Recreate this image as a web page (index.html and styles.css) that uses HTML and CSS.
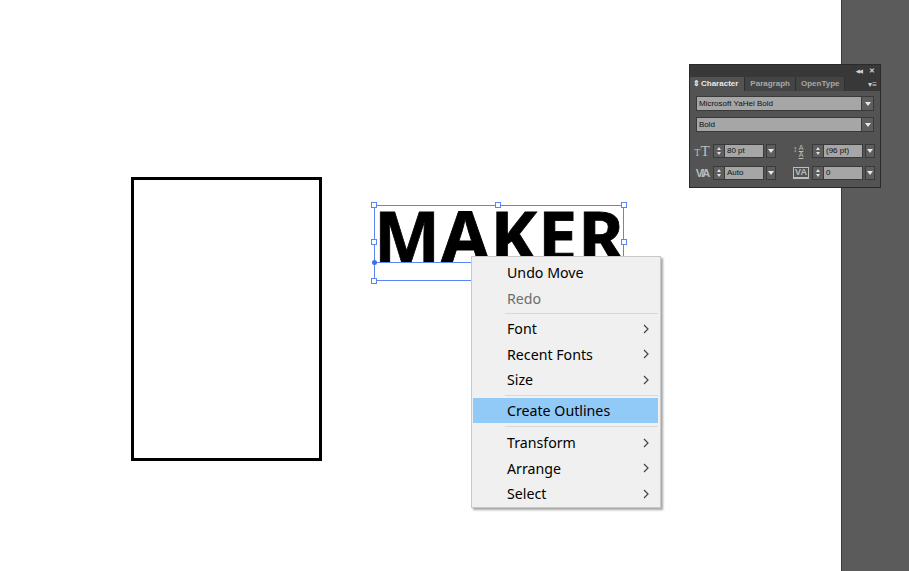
FILE: index.html
```html
<!DOCTYPE html>
<html>
<head>
<meta charset="utf-8">
<link rel="stylesheet" href="styles.css">
</head>
<body>
<div class="app">
  <div class="canvas">
    <div class="artboard"></div>

    <div class="maker">MAKER</div>
    <div class="selection">
      <span class="baseline"></span>
      <span class="dot"></span>
      <span class="h h-tl"></span><span class="h h-tm"></span><span class="h h-tr"></span>
      <span class="h h-ml"></span><span class="h h-mr"></span>
      <span class="h h-bl"></span>
    </div>

    <div class="menu">
      <div class="item">Undo Move</div>
      <div class="item disabled">Redo</div>
      <div class="sep"></div>
      <div class="item sub">Font<svg class="chev" viewBox="0 0 6 10"><path d="M1 1 L5 5 L1 9" /></svg></div>
      <div class="item sub">Recent Fonts<svg class="chev" viewBox="0 0 6 10"><path d="M1 1 L5 5 L1 9" /></svg></div>
      <div class="item sub">Size<svg class="chev" viewBox="0 0 6 10"><path d="M1 1 L5 5 L1 9" /></svg></div>
      <div class="sep"></div>
      <div class="item active">Create Outlines</div>
      <div class="sep last"></div>
      <div class="item sub">Transform<svg class="chev" viewBox="0 0 6 10"><path d="M1 1 L5 5 L1 9" /></svg></div>
      <div class="item sub">Arrange<svg class="chev" viewBox="0 0 6 10"><path d="M1 1 L5 5 L1 9" /></svg></div>
      <div class="item sub">Select<svg class="chev" viewBox="0 0 6 10"><path d="M1 1 L5 5 L1 9" /></svg></div>
    </div>

    <div class="panel">
      <div class="ph">
        <span class="ph-btn">&#9664;&#9664;</span>
        <span class="ph-btn x">&#10005;</span>
      </div>
      <div class="tabs">
        <div class="tab on"><span class="updn">&#8661;</span>Character</div>
        <div class="tab">Paragraph</div>
        <div class="tab">OpenType</div>
        <div class="tab-fill"><span class="pmenu">&#9662;&#8801;</span></div>
      </div>
      <div class="pbody">
        <div class="dd"><span class="dd-text">Microsoft YaHei Bold</span><span class="dd-arrow"><i class="tri"></i></span></div>
        <div class="dd second"><span class="dd-text">Bold</span><span class="dd-arrow"><i class="tri"></i></span></div>
        <div class="prow">
          <div class="grp">
            <span class="ico tt"><span class="t1">T</span><span class="t2">T</span></span>
            <span class="spin"><i class="up"></i><i class="dn"></i></span>
            <span class="fld">80 pt</span>
            <span class="arr"><i class="tri"></i></span>
          </div>
          <div class="grp right">
            <span class="ico lead"><span class="la">A</span><span class="la">A</span><span class="lv">&#8597;</span></span>
            <span class="spin"><i class="up"></i><i class="dn"></i></span>
            <span class="fld">(96 pt)</span>
            <span class="arr"><i class="tri"></i></span>
          </div>
        </div>
        <div class="prow two">
          <div class="grp">
            <span class="ico kern">V/A</span>
            <span class="spin"><i class="up"></i><i class="dn"></i></span>
            <span class="fld">Auto</span>
            <span class="arr"><i class="tri"></i></span>
          </div>
          <div class="grp right">
            <span class="ico track"><span class="va">VA</span></span>
            <span class="spin"><i class="up"></i><i class="dn"></i></span>
            <span class="fld">0</span>
            <span class="arr"><i class="tri"></i></span>
          </div>
        </div>
      </div>
    </div>
  </div>
  <div class="strip"></div>
</div>
</body>
</html>
```

FILE: styles.css
```css
* { box-sizing: border-box; }
html, body { margin: 0; padding: 0; }
body {
  width: 909px;
  height: 571px;
  overflow: hidden;
  background: #ffffff;
  font-family: "Noto Sans", "Liberation Sans", sans-serif;
}
.app {
  display: flex;
  width: 909px;
  height: 571px;
}
.canvas {
  position: relative;
  flex: 1;
  background: #ffffff;
}
.strip {
  width: 68px;
  background: #5b5b5b;
  border-left: 1px solid #3a3a3a;
}

/* artboard rectangle */
.artboard {
  position: absolute;
  left: 131px;
  top: 177px;
  width: 191px;
  height: 284px;
  border: 3px solid #000;
}

/* MAKER text */
.maker {
  position: absolute;
  left: 374px;
  top: 200px;
  font-family: "Noto Sans", sans-serif;
  font-weight: 700;
  font-size: 70px;
  line-height: 70px;
  color: #000;
  letter-spacing: 1px;
  -webkit-text-stroke: 0.8px #000;
}
.selection {
  position: absolute;
  left: 374px;
  top: 205px;
  width: 250px;
  height: 76px;
  border: 1px solid #5a86f2;
}
.baseline {
  position: absolute;
  left: 0;
  top: 56px;
  width: 100px;
  height: 1px;
  background: #5a86f2;
}
.dot {
  position: absolute;
  left: -3px;
  top: 54px;
  width: 5px;
  height: 5px;
  border-radius: 50%;
  background: #3c6ef0;
}
.h {
  position: absolute;
  width: 6px;
  height: 6px;
  background: #fff;
  border: 1px solid #5a86f2;
}
.h-tl { left: -4px; top: -4px; }
.h-tm { left: 120px; top: -4px; }
.h-tr { right: -4px; top: -4px; }
.h-ml { left: -4px; top: 33px; }
.h-mr { right: -4px; top: 33px; }
.h-bl { left: -4px; bottom: -4px; }

/* context menu */
.menu {
  position: absolute;
  left: 471px;
  top: 256px;
  width: 190px;
  padding: 3px 2px 0 1px;
  background: #f0f0f0;
  border: 1px solid #c8c8c8;
  box-shadow: 2px 2px 2px rgba(0,0,0,0.35);
}
.item {
  position: relative;
  height: 25.5px;
  line-height: 25.5px;
  padding-left: 34px;
  font-size: 14.2px;
  color: #000;
  display: flex;
  align-items: center;
  justify-content: space-between;
  padding-right: 9px;
}
.item.disabled { color: #6d6d6d; }
.item.active { background: #91c9f7; }
.chev {
  width: 6px;
  height: 10px;
  fill: none;
  stroke: #444;
  stroke-width: 1.2;
}
.sep {
  height: 5px;
  margin-left: 32px;
  display: flex;
  align-items: center;
}
.sep.last { height: 7px; }
.sep::before {
  content: "";
  flex: 1;
  height: 1px;
  background: #d8d8d8;
}

/* character panel */
.panel {
  position: absolute;
  left: 689px;
  top: 64px;
  width: 192px;
  height: 124px;
  background: #535353;
  border: 1px solid #2a2a2a;
  font-family: "Liberation Sans", Arial, sans-serif;
  font-size: 8px;
  color: #111;
  display: flex;
  flex-direction: column;
}
.ph {
  height: 12px;
  background: #383838;
  display: flex;
  justify-content: flex-end;
  align-items: center;
  gap: 7px;
  padding-right: 5px;
}
.ph-btn {
  color: #cfcfcf;
  font-size: 5px;
  letter-spacing: -1px;
  font-weight: 700;
}
.ph-btn.x { font-size: 7px; letter-spacing: 0; }
.tabs {
  height: 14px;
  display: flex;
  background: #383838;
}
.tab {
  padding: 0 5px;
  height: 14px;
  line-height: 14px;
  background: #444444;
  color: #a8a8a8;
  font-weight: 700;
  font-size: 8px;
  border-right: 1px solid #2f2f2f;
}
.tab.on {
  background: #535353;
  color: #e8e8e8;
  padding: 0 6px 0 3px;
}
.updn { font-size: 8px; margin-right: 1px; }
.tab-fill {
  flex: 1;
  display: flex;
  justify-content: flex-end;
  align-items: center;
  padding-right: 3px;
}
.pmenu { color: #cfcfcf; font-size: 8px; }
.pbody {
  padding: 5px 6px 0 6px;
  display: flex;
  flex-direction: column;
}
.dd {
  height: 15px;
  display: flex;
  border: 1px solid #3a3a3a;
  margin-bottom: 6px;
}
.dd.second { margin-bottom: 12px; }
.dd-text {
  flex: 1;
  background: #a6a6a6;
  line-height: 13px;
  padding-left: 2px;
  color: #111;
}
.dd-arrow {
  width: 12px;
  background: #5e5e5e;
  display: flex;
  align-items: center;
  justify-content: center;
  border-left: 1px solid #3a3a3a;
}
.tri {
  display: block;
  width: 0;
  height: 0;
  border-left: 3px solid transparent;
  border-right: 3px solid transparent;
  border-top: 4px solid #e8e8e8;
}
.prow {
  display: flex;
  height: 14px;
  margin-left: -4px;
}
.prow.two { margin-top: 8px; }
.grp {
  display: flex;
  align-items: stretch;
  width: 84px;
}
.grp.right { margin-left: 15px; }
.ico {
  width: 20px;
  margin-right: 1px;
  color: #bdbdbd;
  display: flex;
  align-items: center;
  justify-content: center;
  font-family: "Liberation Serif", serif;
}
.tt .t1 { font-size: 10px; margin-top: 3px; }
.tt .t2 { font-size: 15px; }
.lead {
  position: relative;
  flex-direction: column;
  font-family: "Liberation Sans", sans-serif;
  font-size: 7px;
  line-height: 7px;
  text-decoration: underline;
}
.lead .lv {
  position: absolute;
  left: 2px;
  top: 2px;
  font-size: 9px;
  text-decoration: none;
}
.kern {
  font-family: "Liberation Sans", sans-serif;
  font-size: 11px;
  letter-spacing: -2px;
  font-weight: 700;
}
.track { font-family: "Liberation Sans", sans-serif; }
.va {
  font-size: 9px;
  font-weight: 700;
  border: 1px solid #bdbdbd;
  padding: 0 1px;
  line-height: 9px;
  border-bottom-width: 2px;
}
.spin {
  width: 12px;
  background: #5e5e5e;
  border: 1px solid #3a3a3a;
  display: flex;
  flex-direction: column;
  align-items: center;
  justify-content: center;
  gap: 2px;
}
.spin .up, .spin .dn {
  display: block;
  width: 0;
  height: 0;
  border-left: 2.5px solid transparent;
  border-right: 2.5px solid transparent;
}
.spin .up { border-bottom: 3px solid #e0e0e0; }
.spin .dn { border-top: 3px solid #e0e0e0; }
.fld {
  width: 39px;
  background: #a6a6a6;
  border: 1px solid #3a3a3a;
  border-left: none;
  line-height: 12px;
  padding-left: 2px;
  color: #111;
}
.arr {
  width: 10px;
  margin-left: 2px;
  background: #5e5e5e;
  border: 1px solid #3a3a3a;
  display: flex;
  align-items: center;
  justify-content: center;
}
```
